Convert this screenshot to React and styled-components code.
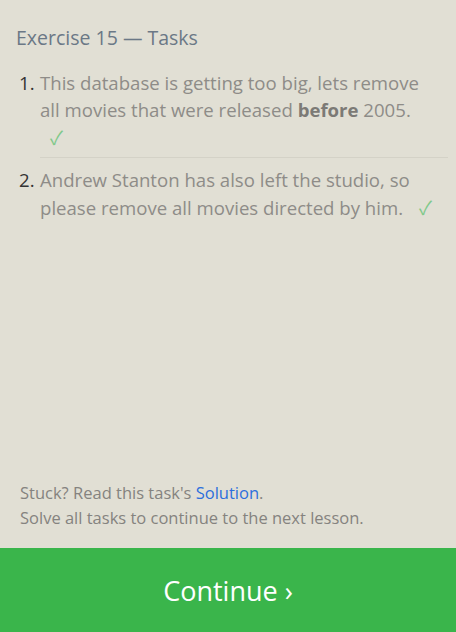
import React from 'react';
import styled, { createGlobalStyle } from 'styled-components';

const GlobalStyle = createGlobalStyle`
  html, body {
    margin: 0;
    padding: 0;
    background: #e1dfd4;
  }
  body {
    font-family: "Open Sans", "Noto Sans", sans-serif;
  }
`;

const Page = styled.div`
  height: 632px;
  display: flex;
  flex-direction: column;
  background: #e1dfd4;
`;

const Content = styled.div`
  flex: 1;
  padding: 25px 8px 0 16px;
`;

const Title = styled.h1`
  margin: 0 0 18px;
  font-size: 19.5px;
  font-weight: 400;
  line-height: 26px;
  color: #6b7886;
`;

const TaskList = styled.ol`
  list-style: none;
  margin: 0;
  padding: 0;
`;

const Task = styled.li`
  position: relative;
  margin: 0 0 8px 24px;
  padding-bottom: ${({ last }) => (last ? '0' : '7px')};
  border-bottom: ${({ last }) => (last ? 'none' : '1px solid #d4d2c7')};
`;

const Num = styled.span`
  position: absolute;
  left: -21px;
  top: 0;
  font-size: 18.6px;
  line-height: 27px;
  color: #333;
`;

const Text = styled.p`
  margin: 0;
  padding-right: 12px;
  font-size: 18.6px;
  line-height: 27px;
  color: #8e8c88;

  b {
    font-weight: 700;
    color: #7c7a76;
  }
`;

const Check = styled.span`
  display: ${({ $own }) => ($own ? 'block' : 'inline-block')};
  margin-left: ${({ $own }) => ($own ? '10px' : '16px')};
  color: #80c98a;
  font-family: "Noto Sans CJK JP", "DejaVu Sans", sans-serif;
  font-size: 19px;
  line-height: 27px;
`;

const Footer = styled.div`
  padding: 0 20px 18px;
  font-size: 16.5px;
  line-height: 25px;
  color: #85837f;
`;

const SolutionLink = styled.a`
  color: #2d6fdd;
  text-decoration: none;
`;

const ContinueButton = styled.button`
  height: 84px;
  border: none;
  background: #3ab54b;
  color: #fff;
  font-family: "Open Sans", "Noto Sans", sans-serif;
  font-size: 27px;
  cursor: pointer;
`;

export default function App() {
  return (
    <>
      <GlobalStyle />
      <Page>
        <Content>
          <Title>Exercise 15 — Tasks</Title>
          <TaskList>
            <Task>
              <Num>1.</Num>
              <Text>
                This database is getting too big, lets remove all movies that were released <b>before</b> 2005.
                <Check $own>✓</Check>
              </Text>
            </Task>
            <Task last>
              <Num>2.</Num>
              <Text>
                Andrew Stanton has also left the studio, so please remove all movies directed by him.
                <Check>✓</Check>
              </Text>
            </Task>
          </TaskList>
        </Content>
        <Footer>
          Stuck? Read this task's <SolutionLink href="#">Solution</SolutionLink>.
          <br />
          Solve all tasks to continue to the next lesson.
        </Footer>
        <ContinueButton>Continue ›</ContinueButton>
      </Page>
    </>
  );
}
